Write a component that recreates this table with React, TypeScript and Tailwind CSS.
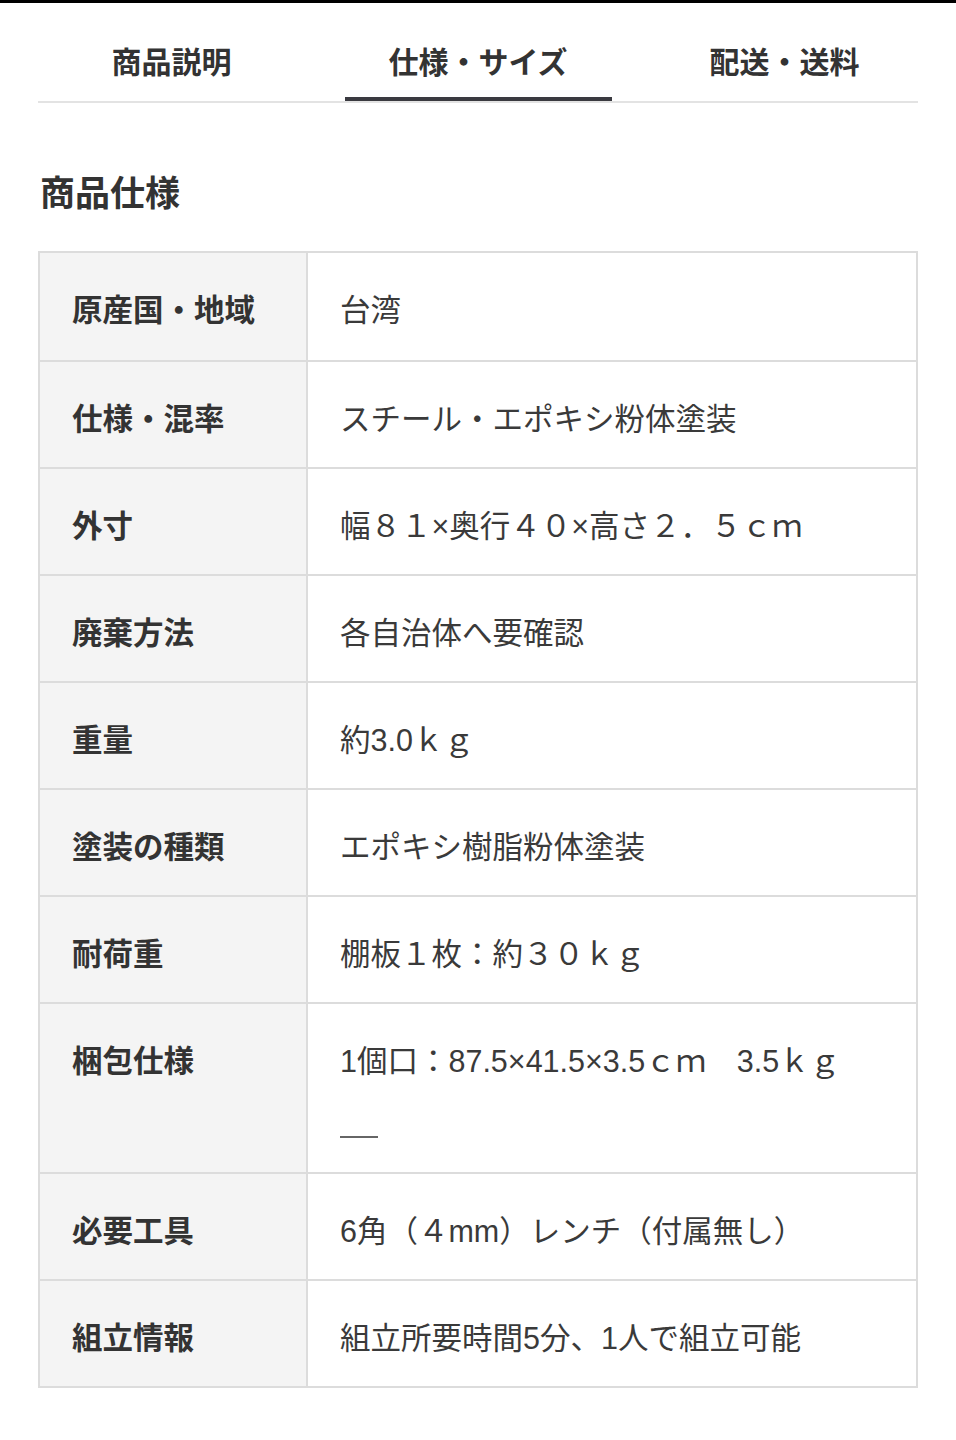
import React from "react";

const font = "font-['Liberation_Sans','Noto_Sans_CJK_JP',sans-serif]";

const rows: { label: string; value: string; extra?: boolean }[] = [
  { label: "原産国・地域", value: "台湾" },
  { label: "仕様・混率", value: "スチール・エポキシ粉体塗装" },
  { label: "外寸", value: "幅８１×奥行４０×高さ２．５ｃｍ" },
  { label: "廃棄方法", value: "各自治体へ要確認" },
  { label: "重量", value: "約3.0ｋｇ" },
  { label: "塗装の種類", value: "エポキシ樹脂粉体塗装" },
  { label: "耐荷重", value: "棚板１枚：約３０ｋｇ" },
  { label: "梱包仕様", value: "1個口：87.5×41.5×3.5ｃｍ　3.5ｋｇ", extra: true },
  { label: "必要工具", value: "6角（４mm）レンチ（付属無し）" },
  { label: "組立情報", value: "組立所要時間5分、1人で組立可能" },
];

export default function App() {
  return (
    <div className={`w-[956px] min-h-[1440px] bg-white ${font}`}>
      <div className="h-[3px] bg-black" />
      <div className="mx-[38px] flex justify-between border-b-2 border-[#e3e3e3]">
        {["商品説明", "仕様・サイズ", "配送・送料"].map((t, i) => (
          <div
            key={t}
            className={`w-[267px] h-[98px] pt-[24px] flex items-center justify-center text-[30px] font-bold text-[#333] ${
              i === 1 ? "border-b-4 border-[#3a3a40]" : "border-b-4 border-transparent"
            }`}
          >
            {t}
          </div>
        ))}
      </div>

      <h2 className="mt-[66px] ml-[40px] text-[35px] leading-[50px] font-bold text-[#333]">商品仕様</h2>

      <div className="mt-[32px] mx-[38px] border-2 border-[#dcdcdc]">
        {rows.map((r, i) => (
          <div
            key={r.label}
            className={`grid grid-cols-[268px_1fr] ${i > 0 ? "border-t-2 border-[#dcdcdc]" : ""} ${
              r.extra ? "h-[170px]" : "h-[107px]"
            } ${i === 0 ? "h-[105px]" : ""}`}
          >
            <div className="bg-[#f4f4f4] border-r-2 border-[#dcdcdc] pl-[32px] pt-[37px] text-[30.5px] leading-[40px] font-bold text-[#333]">
              {r.label}
            </div>
            <div className="pl-[32px] pt-[37px] text-[30.5px] leading-[40px] text-[#3a3a3a]">
              <div>{r.value}</div>
              {r.extra && <div className="mt-[55px] h-[1.5px] w-[38px] bg-[#666]" />}
            </div>
          </div>
        ))}
      </div>
    </div>
  );
}
